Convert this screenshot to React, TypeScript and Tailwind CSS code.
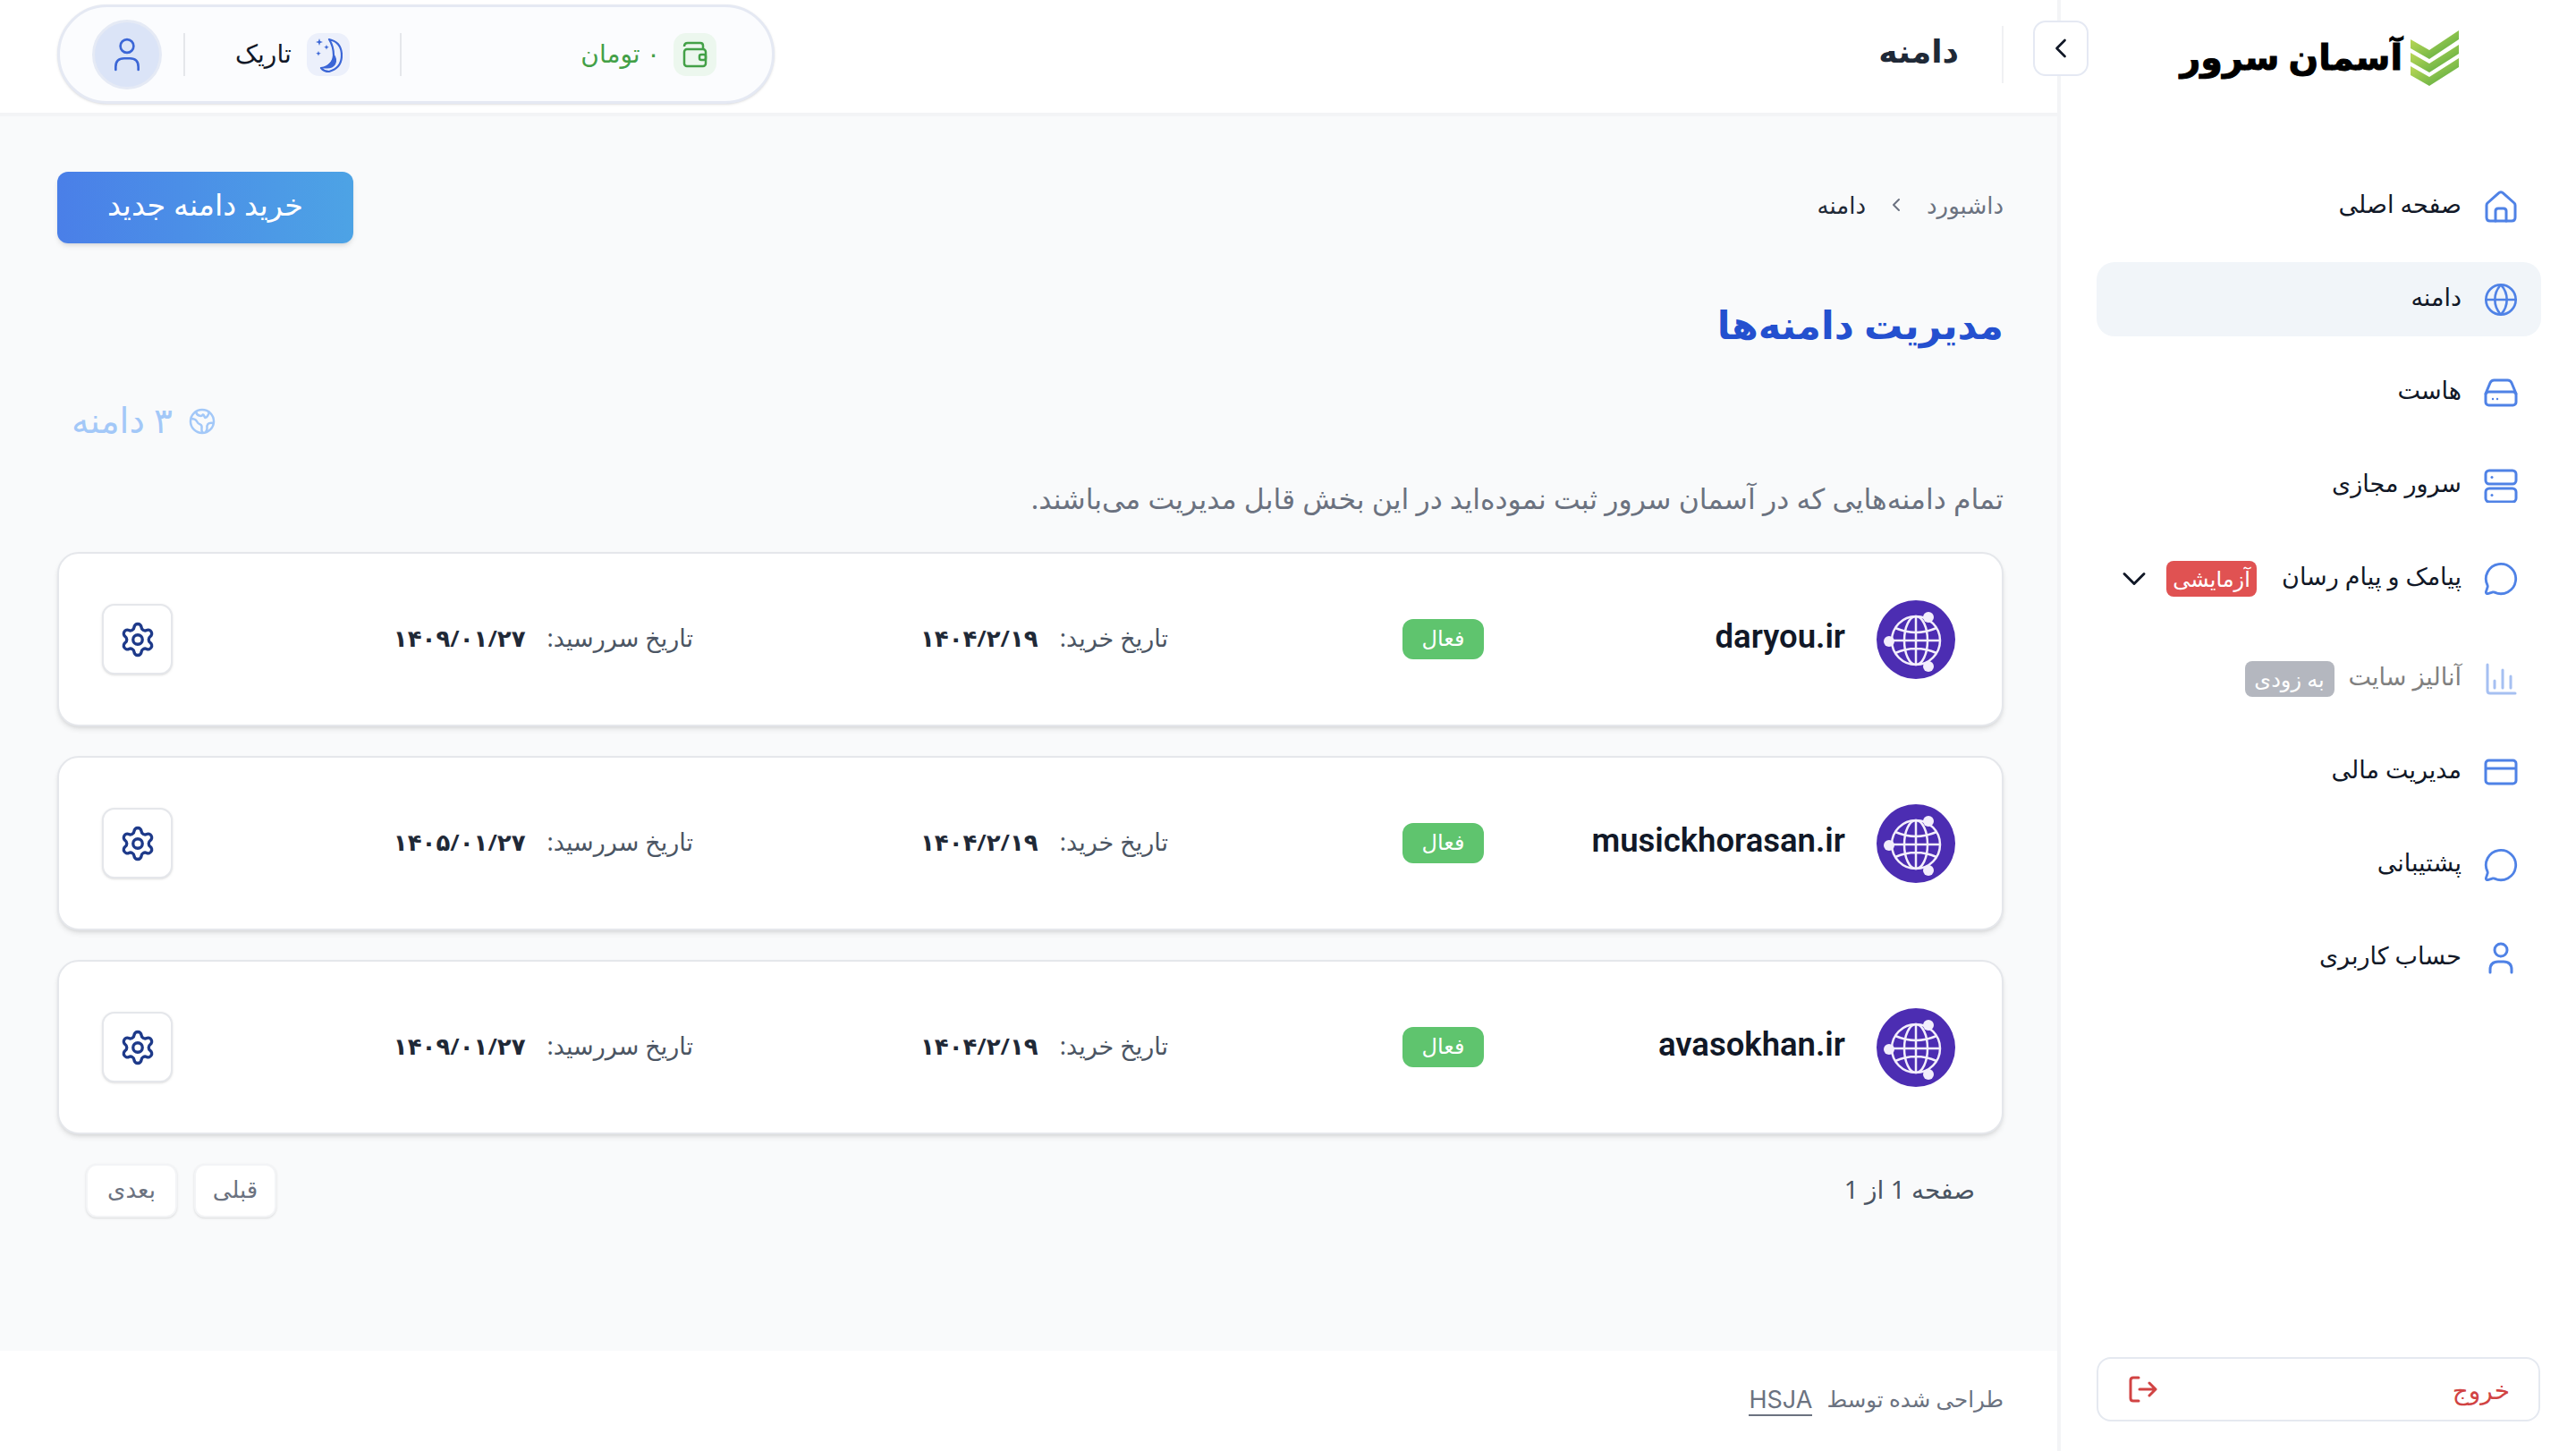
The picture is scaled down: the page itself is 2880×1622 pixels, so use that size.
import { ChevronDown, ChevronLeft, ChevronRight, Globe, MessageCircle, Settings } from "lucide-react";
import type { ReactNode } from "react";

const HomeIcon = () => (
  <svg width="36" height="36" viewBox="0 0 36 36" fill="none" stroke="currentColor" strokeWidth="3" strokeLinejoin="round" strokeLinecap="round">
    <path d="M3 14 15.500 2.800a3.500 3.500 0 0 1 5 0L33 14q1 1 1 2.500V30q0 4-4 4H6q-4 0-4-4V16.500Q2 15 3 14Z" />
    <path d="M12 34V23q0-3 3-3h6q3 0 3 3v11" />
  </svg>
);

const DriveIcon = () => (
  <svg width="38" height="32" viewBox="0 0 38 32" fill="none" stroke="currentColor" strokeWidth="3" strokeLinejoin="round" strokeLinecap="round">
    <path d="M2 17 7 5q1.300-3 4.500-3h15q3.200 0 4.500 3l5 12" />
    <rect x="2" y="15" width="34" height="15" rx="3.500" />
    <circle cx="10" cy="23" r="1.200" fill="currentColor" stroke="none" />
    <circle cx="15" cy="23" r="1.200" fill="currentColor" stroke="none" />
  </svg>
);

const ServerIcon = () => (
  <svg width="38" height="38" viewBox="0 0 38 38" fill="none" stroke="currentColor" strokeWidth="3">
    <rect x="2" y="2" width="34" height="15" rx="4" />
    <rect x="2" y="22" width="34" height="15" rx="4" />
    <circle cx="9" cy="9.500" r="1.500" fill="currentColor" stroke="none" />
    <circle cx="9" cy="29.500" r="1.500" fill="currentColor" stroke="none" />
  </svg>
);

const ChartIcon = () => (
  <svg width="36" height="36" viewBox="0 0 36 36" fill="none" stroke="currentColor" strokeWidth="3" strokeLinecap="round">
    <path d="M3 2v29q0 3 3 3h28" />
    <path d="M11 20v8M20 8v20M29 15v13" />
  </svg>
);

const CardIcon = () => (
  <svg width="38" height="30" viewBox="0 0 38 30" fill="none" stroke="currentColor" strokeWidth="3">
    <rect x="2" y="2" width="34" height="26" rx="3.500" />
    <path d="M2 11h34" />
  </svg>
);

const UserIcon = ({ size = 36, sw = 3 }: { size?: number; sw?: number }) => (
  <svg width={size} height={size} viewBox="0 0 36 36" fill="none" stroke="currentColor" strokeWidth={sw} strokeLinecap="round">
    <circle cx="18" cy="9" r="7" />
    <path d="M6 34v-3q0-9 9-9h6q9 0 9 9v3" />
  </svg>
);

const DomainGlobe = () => (
  <svg width="88" height="88" viewBox="0 0 88 88" fill="none" className="shrink-0">
    <circle cx="44" cy="44" r="44" fill="#4c2db2" />
    <g stroke="#f3eefc" strokeWidth="2.500">
      <circle cx="44" cy="45" r="27" />
      <ellipse cx="44" cy="45" rx="13" ry="27" />
      <path d="M17 45h54M44 18v54M21 31q23 10 46 0M21 59q23-10 46 0" />
    </g>
    <circle cx="58" cy="19" r="6" fill="#f3eefc" />
    <circle cx="14" cy="46" r="6" fill="#f3eefc" />
    <circle cx="58" cy="74" r="6" fill="#f3eefc" />
  </svg>
);

const WalletIcon = () => (
  <svg width="28" height="30" viewBox="0 0 28 30" fill="none" stroke="#43a047" strokeWidth="2.500" strokeLinejoin="round">
    <path d="M2 6q0-4 4-4h14q3 0 3 3v4" />
    <rect x="2" y="9" width="24" height="19" rx="3" />
    <rect x="19" y="15" width="7" height="6" rx="2" />
  </svg>
);

const MoonIcon = () => (
  <svg width="32" height="42" viewBox="0 0 32 42" fill="none">
    <path d="M17 4q14 3 14 18 0 14-14 18-6 0-9-4 13-2 14-14 0-10-5-18Z" stroke="#3b66d6" strokeWidth="2.200" strokeLinejoin="round" fill="none" />
    <path d="M22 20q0 10-12 16 10 2 14-4 3-6-2-12Z" fill="#3b66d6" />
    <path d="M6 3 7 6l3 1-3 1-1 3-1-3-3-1 3-1ZM14 10l.800 2 2 .800-2 .800-.800 2-.800-2-2-.800 2-.800ZM5 17l.800 2 2 .800-2 .800-.800 2-.800-2-2-.800 2-.800Z" fill="#3b66d6" />
  </svg>
);

const WorldIcon = () => (
  <svg width="30" height="30" viewBox="0 0 30 30" fill="none" stroke="#a3c8f8" strokeWidth="2.500" strokeLinejoin="round">
    <circle cx="15" cy="15" r="13" />
    <path d="M2.500 12q5 0 6.500 3t4 3.500q2 1 1.500 4t1 5" />
    <path d="M8 3.500q.5 4 3.500 5t4-.5 2 1.500 3.500-.5 1-5" />
    <path d="M28 17q-5-1-6.500 1t-1 4-1.500 5" />
  </svg>
);

const LogoutIcon = () => (
  <svg width="32" height="30" viewBox="0 0 32 30" fill="none" stroke="#d14343" strokeWidth="3" strokeLinecap="round" strokeLinejoin="round">
    <path d="M11 2H5q-3 0-3 3v20q0 3 3 3h6" />
    <path d="M12 15h18M23 8l7 7-7 7" />
  </svg>
);

const LogoMark = () => (
  <svg width="56" height="64" viewBox="0 0 56 64" className="shrink-0">
    <defs>
      <linearGradient id="logoGrad" x1="0" y1="0" x2="1" y2="1">
        <stop offset="0" stopColor="#cde05a" />
        <stop offset="1" stopColor="#4ca53f" />
      </linearGradient>
    </defs>
    <path d="M1 12 22 24 55 2v10L22 34 1 22Z" fill="url(#logoGrad)" />
    <path d="M1 27 22 39 55 18v10L22 49 1 37Z" fill="url(#logoGrad)" />
    <path d="M1 42 22 54 55 33v10L22 64 1 52Z" fill="url(#logoGrad)" />
  </svg>
);

type NavItem = { label: string; icon: ReactNode; active?: boolean; disabled?: boolean; badge?: ReactNode; chevron?: boolean };

const navItems: NavItem[] = [
  { label: "صفحه اصلی", icon: <HomeIcon /> },
  { label: "دامنه", icon: <Globe size={40} strokeWidth={1.6} />, active: true },
  { label: "هاست", icon: <DriveIcon /> },
  { label: "سرور مجازی", icon: <ServerIcon /> },
  {
    label: "پیامک و پیام رسان",
    icon: <MessageCircle size={40} strokeWidth={1.7} />,
    chevron: true,
    badge: <span className="rounded-[8px] bg-[#e05252] h-10 w-[101px] flex items-center justify-center text-[24px] text-white">آزمایشی</span>,
  },
  {
    label: "آنالیز سایت",
    icon: <ChartIcon />,
    disabled: true,
    badge: <span className="rounded-[8px] bg-[#6b7280] h-10 w-[100px] flex items-center justify-center text-[24px] text-white">به زودی</span>,
  },
  { label: "مدیریت مالی", icon: <CardIcon /> },
  { label: "پشتیبانی", icon: <MessageCircle size={40} strokeWidth={1.7} /> },
  { label: "حساب کاربری", icon: <UserIcon /> },
];

const domains = [
  { name: "daryou.ir", bought: "۱۴۰۴/۲/۱۹", expires: "۱۴۰۹/۰۱/۲۷" },
  { name: "musickhorasan.ir", bought: "۱۴۰۴/۲/۱۹", expires: "۱۴۰۵/۰۱/۲۷" },
  { name: "avasokhan.ir", bought: "۱۴۰۴/۲/۱۹", expires: "۱۴۰۹/۰۱/۲۷" },
];

function Sidebar() {
  return (
    <aside className="w-[580px] shrink-0 bg-white border-l-4 border-[#f3f4f6] flex flex-col">
      {/* Logo */}
      <div className="h-[128px] flex items-center gap-2 pr-[130px] pt-0">
        <LogoMark />
        <span className="text-[39.500px] font-black text-black whitespace-nowrap leading-none [-webkit-text-stroke:1px_black]">آسمان سرور</span>
      </div>

      {/* Nav */}
      <nav className="flex flex-col gap-[21px] pr-[39px] pl-[40px] mt-[61px]">
        {navItems.map((item) => (
          <div
            key={item.label}
            className={`h-[83px] rounded-[20px] flex items-center pr-[25px] pl-[20px] ${item.active ? "bg-[#f1f5f9]" : ""} ${item.disabled ? "mt-2" : ""}`}
          >
            <span className={`w-[40px] flex justify-center shrink-0 text-[#4f82e6] ${item.disabled ? "opacity-50" : ""}`}>{item.icon}</span>
            <span className={`mr-[24px] pb-1 text-[27px] whitespace-nowrap ${item.disabled ? "text-[#808080]" : "text-[#111827]"}`}>{item.label}</span>
            {item.badge && <span className={`${item.chevron ? "mr-[28px]" : "mr-[16px]"} ${item.disabled ? "opacity-50" : ""}`}>{item.badge}</span>}
            {item.chevron && <ChevronDown size={44} strokeWidth={1.6} className="mr-auto text-[#111827]" />}
          </div>
        ))}
      </nav>

      <div className="mt-auto px-[40px] pb-[33px]">
        <div className="h-[72px] rounded-[16px] border-2 border-[#e5e9f0] flex items-center justify-between pr-[32px] pl-[34px]">
          <span className="text-[28px] text-[#d14343]">خروج</span>
          <LogoutIcon />
        </div>
      </div>
    </aside>
  );
}

function Header() {
  return (
    <header className="relative h-[130px] shrink-0 bg-white border-b-4 border-[#f3f4f6] flex items-center justify-between pr-[60px] pl-[64px]">
      <button className="absolute -right-[35px] top-[23px] w-[62px] h-[62px] z-10 rounded-[14px] bg-white border-2 border-[#e5e9f3] flex items-center justify-center">
        <ChevronLeft size={36} strokeWidth={1.8} className="text-[#111827]" />
      </button>
      <div className="h-[64px] border-r-2 border-[#f0f1f3] pr-[48px] flex items-center -mt-1">
        <h2 className="text-[36px] font-bold text-[#1f2937] leading-none pb-[8px]">دامنه</h2>
      </div>
      <div className="w-[802px] h-[111px] -mt-[5px] rounded-full border-[3px] border-[#e5e9f3] bg-[#fbfcfe] shadow-sm flex items-center pr-[62px] pl-[36px]">
        <div className="flex items-center gap-[15px] flex-1">
          <span className="w-[48px] h-[48px] rounded-[14px] bg-[#ecf7ee] flex items-center justify-center"><WalletIcon /></span>
          <span className="text-[28px] text-[#43a047] pb-1">۰ تومان</span>
        </div>
        <div className="h-[48px] border-r-2 border-[#e5e7eb]" />
        <div className="flex items-center gap-[17px] pr-[56px] pl-[56px]">
          <span className="w-[48px] h-[48px] rounded-[14px] bg-[#ecf0fb] flex items-center justify-center"><MoonIcon /></span>
          <span className="text-[28px] text-[#111827] pb-1">تاریک</span>
        </div>
        <div className="h-[48px] border-r-2 border-[#e5e7eb]" />
        <span className="mr-[24px] w-[78px] h-[78px] rounded-full bg-[#dbe4f7] border-[3px] border-[#e5eaf5] flex items-center justify-center text-[#3b66d6]">
          <UserIcon size={38} sw={2.5} />
        </span>
      </div>
    </header>
  );
}

function DomainCard({ name, bought, expires }: { name: string; bought: string; expires: string }) {
  return (
    <div className="h-[195px] rounded-[24px] bg-white border-2 border-[#e5e7eb] shadow-md grid grid-cols-[527px_353px_531px_1fr] items-center pr-[52px] pl-[48px]">
      <div className="flex items-center gap-[35px]">
        <DomainGlobe />
        <span dir="ltr" className="font-['Roboto'] text-[36.500px] font-semibold text-[#111827] pb-1">{name}</span>
      </div>
      <div>
        <span className="inline-flex items-center justify-center w-[91px] h-[45px] rounded-[12px] bg-[#5fc46e] text-white text-[24px] pb-[3px]">فعال</span>
      </div>
      <div className="flex items-center gap-[24px] text-[27px] pb-[3px]">
        <span className="text-[#4b5563]">تاریخ خرید:</span>
        <span className="text-[26px] tracking-[-2px] text-[#1f2937] font-semibold">{bought}</span>
      </div>
      <div className="flex items-center justify-between text-[27px]">
        <div className="flex items-center gap-[24px] pb-[3px]">
          <span className="text-[#4b5563]">تاریخ سررسید:</span>
          <span className="text-[26px] tracking-[-2px] text-[#1f2937] font-semibold">{expires}</span>
        </div>
        <button className="w-[79px] h-[79px] rounded-[14px] border-2 border-[#e5e7eb] bg-white shadow-sm flex items-center justify-center">
          <Settings size={42} strokeWidth={1.9} className="text-[#1e3a8a]" />
        </button>
      </div>
    </div>
  );
}

export default function App() {
  return (
    <div dir="rtl" className="flex h-screen overflow-hidden bg-white font-['Noto_Sans','DejaVu_Sans',sans-serif]">
      <Sidebar />
      <main className="flex-1 min-w-0 flex flex-col bg-[#f9fafb]">
        <Header />
        <div className="flex-1 pr-[60px] pl-[64px] pt-[62px]">
          {/* Breadcrumb + buy */}
          <div className="flex items-center justify-between h-[80px]">
            <div className="flex items-center gap-[22px] text-[26px] pb-[6px]">
              <span className="text-[#6b7280]">داشبورد</span>
              <ChevronRight size={24} className="text-[#6b7280] rotate-180" />
              <span className="text-[#1f2937]">دامنه</span>
            </div>
            <button className="w-[331px] h-[80px] rounded-[12px] bg-gradient-to-l from-[#4da3e5] to-[#4a7fe8] text-white text-[33.500px] pb-[8px] shadow-md">خرید دامنه جدید</button>
          </div>

          <h1 className="mt-[59px] text-[43px] font-bold text-[#2450cf] leading-[64px]">مدیریت دامنه‌ها</h1>

          <div className="mt-[50px] flex items-center gap-[18px] justify-end pl-[16px]">
            <WorldIcon />
            <span className="text-[39px] font-medium text-[#a3c8f8] leading-[48px] pb-1">۳ دامنه</span>
          </div>

          <p className="mt-[36px] text-[31.500px] text-[#6b7280] leading-[48px]">تمام دامنه‌هایی که در آسمان سرور ثبت نموده‌اید در این بخش قابل مدیریت می‌باشند.</p>

          <div className="mt-[36px] flex flex-col gap-[33px]">
            {domains.map((d) => (
              <DomainCard key={d.name} {...d} />
            ))}
          </div>

          {/* Pagination */}
          <div className="mt-[33px] flex items-center justify-between px-[32px]">
            <span className="text-[28px] text-[#4b5563] pb-1">صفحه 1 از 1</span>
            <div className="flex gap-[19px]">
              <button className="w-[92px] h-[60px] rounded-[12px] bg-white border-2 border-[#f3f4f6] shadow-sm text-[26px] text-[#6b7280] pb-[4px]">قبلی</button>
              <button className="w-[102px] h-[60px] rounded-[12px] bg-white border-2 border-[#f3f4f6] shadow-sm text-[26px] text-[#6b7280] pb-[4px]">بعدی</button>
            </div>
          </div>
        </div>

        <footer className="h-[112px] shrink-0 bg-white pr-[60px] pl-[64px] flex items-center gap-[16px] text-[24.500px] text-[#6b7280]">
          <span className="pb-1">طراحی شده توسط</span>
          <span className="font-['Inter'] text-[27px] leading-[32px] border-b-2 border-[#6b7280]">HSJA</span>
        </footer>
      </main>
    </div>
  );
}
